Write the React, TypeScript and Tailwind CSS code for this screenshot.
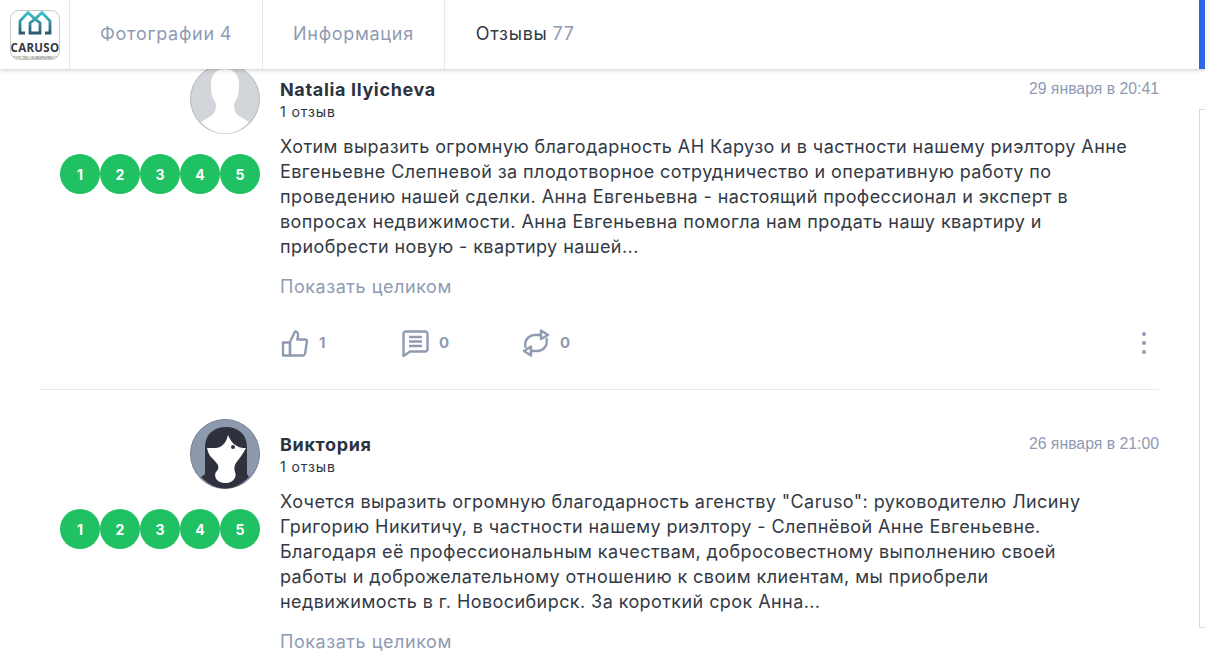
const reviews = [
  {
    id: 'natalia',
    name: 'Natalia Ilyicheva',
    date: '29 января в 20:41',
    avatar: 'male',
    lines: [
      'Хотим выразить огромную благодарность АН Карузо и в частности нашему риэлтору Анне',
      'Евгеньевне Слепневой за плодотворное сотрудничество и оперативную работу по',
      'проведению нашей сделки. Анна Евгеньевна - настоящий профессионал и эксперт в',
      'вопросах недвижимости. Анна Евгеньевна помогла нам продать нашу квартиру и',
      'приобрести новую - квартиру нашей...',
    ],
  },
  {
    id: 'victoria',
    name: 'Виктория',
    date: '26 января в 21:00',
    avatar: 'female',
    lines: [
      'Хочется выразить огромную благодарность агенству "Caruso": руководителю Лисину',
      'Григорию Никитичу, в частности нашему риэлтору - Слепнёвой Анне Евгеньевне.',
      'Благодаря её профессиональным качествам, добросовестному выполнению своей',
      'работы и доброжелательному отношению к своим клиентам, мы приобрели',
      'недвижимость в г. Новосибирск. За короткий срок Анна...',
    ],
  },
];

function Logo() {
  return (
    <div className="w-[50px] h-[50px] rounded-[9px] border border-[#c9c9c9] bg-white overflow-hidden flex flex-col items-center">
      <svg width="36" height="26" viewBox="0 0 36 26" fill="none" className="shrink-0">
        <defs>
          <linearGradient id="logoGrad" x1="0" y1="0" x2="0" y2="1">
            <stop offset="0" stopColor="#3fc4cf" />
            <stop offset="1" stopColor="#2b5a6e" />
          </linearGradient>
        </defs>
        <path
          d="M8 22H3V10L11 1.5L18 8L25 1.5L33 10V22H28M13 12V22H23V12L18 8Z"
          stroke="url(#logoGrad)"
          strokeWidth="2.8"
        />
      </svg>
      <span className="font-['Open_Sans',sans-serif] font-bold text-[11.5px] leading-[14px] tracking-[0.3px] text-[#33393f] mt-[4px] whitespace-nowrap">
        CARUSO
      </span>
      <span className="font-['Open_Sans',sans-serif] text-[3.5px] leading-[5px] whitespace-nowrap text-[#444]">
        АГЕНТСТВО НЕДВИЖИМОСТИ
      </span>
    </div>
  );
}

function Tab({ label, count, active, last }: { label: string; count: string; active?: boolean; last?: boolean }) {
  return (
    <div className={`h-full flex items-center pb-[2px] text-[18px] tracking-[0.7px] ${last ? 'pl-[31px] pr-[30px]' : 'px-[30px] border-r border-[#e4e9f0]'}`}>
      <span className={active ? 'text-[#333a45]' : 'text-[#8f9bb3]'}>{label}</span>
      {count && <span className="text-[#8f9bb3] ml-[5px]">{count}</span>}
    </div>
  );
}

function MaleAvatar() {
  return (
    <svg width="70" height="70" viewBox="0 0 70 70" className="shrink-0">
      <circle cx="35" cy="35" r="34.5" fill="#d2d5da" stroke="#b4b7bc" />
      <path
        d="M35 5C26 5 21 11 21 20C21 25 21 29 22 31C23 35 25 37 26 40C26 46 25 49 21 52L11 58C17 65 26 69.5 35 69.5C44 69.5 53 65 59 58L49 52C45 49 44 46 44 40C45 37 47 35 48 31C49 29 49 25 49 20C49 11 44 5 35 5Z"
        fill="#fff"
      />
    </svg>
  );
}

function FemaleAvatar() {
  return (
    <svg width="70" height="70" viewBox="0 0 70 70" className="shrink-0">
      <circle cx="35" cy="35" r="34.5" fill="#8d99ad" stroke="#747f91" />
      <path
        d="M15 55V28C15 15 24 8 36 8C48 8 57 15 57 28V55L59 58C52 65 44 69.5 35 69.5C26 69.5 18 65 11 58Z"
        fill="#2f323e"
      />
      <path
        d="M38 16C37 21 34 26 30 28C26 29.5 22 29 17 29C18 33 19 36 21 38C24 41 26 43 28 46C29 49 28 51 26 53C24 56 25 64 36 64C44 64 47 57 45 53C44 50 44 47 46 44C49 40 53 35 56 29C53 29 50 29 47 27C43 25 40 21 38 16Z"
        fill="#fff"
      />
      <circle cx="43" cy="28" r="2" fill="#2f323e" />
    </svg>
  );
}

function LikeIcon() {
  return (
    <svg width="28" height="28" viewBox="0 0 28 28" fill="none" stroke="#8f9bb3" strokeWidth="2.4" strokeLinejoin="round">
      <path d="M9 13L14 2.5C16.5 2.5 17.5 4.5 17 7L16.3 10.5H25L26 11.8L24 25L22.5 26.5H9Z" />
      <path d="M2 13.5H9V26.5H2Z" />
    </svg>
  );
}

function CommentIcon() {
  return (
    <svg width="28" height="28" viewBox="0 0 28 28" fill="none" stroke="#8f9bb3" strokeWidth="2.4" strokeLinejoin="round">
      <path d="M4 2.5H25L26.5 4V21L25 22.5H9L2.5 27V4Z" />
      <path d="M8 8H21M8 12.5H21M8 17H21" />
    </svg>
  );
}

function RepostIcon() {
  return (
    <svg width="28" height="28" viewBox="0 0 28 28" fill="none" stroke="#8f9bb3" strokeWidth="2.4" strokeLinecap="round">
      <path d="M3.5 18C2 11 7 6 13 6H19" />
      <path d="M24.5 10C26 17 21 22 15 22H9" />
      <path d="M19 1.5L26 6L19 10Z" strokeLinejoin="round" />
      <path d="M9 17.5L2 22L9 26.5Z" strokeLinejoin="round" />
    </svg>
  );
}

function Action({ icon, count, width }: { icon: React.ReactNode; count: number; width: string }) {
  return (
    <div className={`flex items-center ${width}`}>
      {icon}
      <span className="ml-[10px] text-[15px] font-bold text-[#8f9bb3]">{count}</span>
    </div>
  );
}

function Review({ review }: { review: (typeof reviews)[number] }) {
  return (
    <article className="flex h-[325px]">
      <div className="w-[220px] shrink-0 flex flex-col items-end">
        {review.avatar === 'male' ? <MaleAvatar /> : <FemaleAvatar />}
        <div className="flex mt-5">
          {[1, 2, 3, 4, 5].map((n) => (
            <div
              key={n}
              className="w-10 h-10 rounded-full bg-[#1fc162] flex items-center justify-center text-white text-[14px] font-bold"
            >
              {n}
            </div>
          ))}
        </div>
      </div>
      <div className="ml-5 flex-1 min-w-0">
        <div className="flex justify-between">
          <div>
            <div className="text-[18px] leading-[25px] font-bold tracking-[0.65px] text-[#2c3340] pt-[12.5px]">{review.name}</div>
            <div className="text-[14px] leading-[20px] tracking-[0.9px] text-[#2c3340] mt-[0.5px]">1 отзыв</div>
          </div>
          <div className="font-['Liberation_Sans',sans-serif] text-[15.8px] leading-[20px] text-[#8f9bb3] pt-[15px]">
            {review.date}
          </div>
        </div>
        <div className="mt-[12px] text-[18px] leading-[25px] tracking-[0.42px] text-[#333a45]">
          {review.lines.map((line) => (
            <div key={line} className="whitespace-nowrap">{line}</div>
          ))}
        </div>
        <div className="mt-[15px] text-[18px] leading-[25px] tracking-[0.55px] text-[#8f9bb3]">Показать целиком</div>
        <div className="mt-[30px] flex items-center h-[28px]">
          <div className="ml-px flex items-center">
            <Action icon={<LikeIcon />} count={1} width="w-[120px]" />
            <Action icon={<CommentIcon />} count={0} width="w-[121px]" />
            <Action icon={<RepostIcon />} count={0} width="w-[100px]" />
          </div>
          <div className="ml-auto mr-[13px] flex flex-col gap-[5px]">
            <div className="w-[4px] h-[4px] rounded-full bg-[#8f9bb3]" />
            <div className="w-[4px] h-[4px] rounded-full bg-[#8f9bb3]" />
            <div className="w-[4px] h-[4px] rounded-full bg-[#8f9bb3]" />
          </div>
        </div>
      </div>
    </article>
  );
}

export default function App() {
  return (
    <div className="relative w-[1205px] h-[651px] overflow-hidden bg-white font-['Inter',sans-serif]">
      <header className="relative z-10 h-[69px] bg-white flex items-stretch shadow-[0_1px_4px_rgba(0,0,0,0.22)]">
        <div className="w-[70px] shrink-0 flex items-center justify-center border-r border-[#e4e9f0] pl-px">
          <Logo />
        </div>
        <Tab label="Фотографии" count="4" />
        <Tab label="Информация" count="" />
        <Tab label="Отзывы" count="77" active last />
        <div className="ml-auto w-[6px] bg-[#2b67e8]" />
      </header>
      <main className="-mt-[5px] pl-10 pr-[46px]">
        {reviews.map((review, i) => (
          <div key={review.id} className={i > 0 ? 'border-t border-[#e4e9f0] pt-[29px]' : ''}>
            <Review review={review} />
          </div>
        ))}
      </main>
      <div className="absolute left-[1199px] top-[109px] w-[6px] h-[519px] border border-r-0 border-[#d3dae6]" />
    </div>
  );
}
